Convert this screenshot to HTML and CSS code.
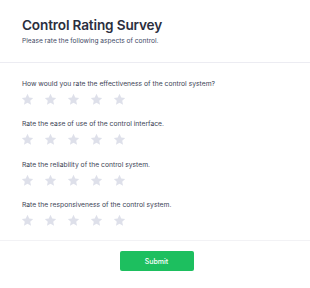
FILE: index.html
```html
<!DOCTYPE html>
<html>
<head>
<meta charset="utf-8">
<link rel="stylesheet" href="styles.css">
</head>
<body>
<div class="survey">
  <header class="header">
    <h1 class="title">Control Rating Survey</h1>
    <p class="subtitle">Please rate the following aspects of control.</p>
  </header>
  <main class="questions">
    <div class="question">
      <p class="q-text">How would you rate the effectiveness of the control system?</p>
      <div class="stars">
        <svg class="star" viewBox="0 0 24 24"><path d="M12 1.5l3.2 6.9 7.3.8-5.5 5 1.6 7.4L12 17.9l-6.6 3.7 1.6-7.4-5.5-5 7.3-.8z"/></svg>
        <svg class="star" viewBox="0 0 24 24"><path d="M12 1.5l3.2 6.9 7.3.8-5.5 5 1.6 7.4L12 17.9l-6.6 3.7 1.6-7.4-5.5-5 7.3-.8z"/></svg>
        <svg class="star" viewBox="0 0 24 24"><path d="M12 1.5l3.2 6.9 7.3.8-5.5 5 1.6 7.4L12 17.9l-6.6 3.7 1.6-7.4-5.5-5 7.3-.8z"/></svg>
        <svg class="star" viewBox="0 0 24 24"><path d="M12 1.5l3.2 6.9 7.3.8-5.5 5 1.6 7.4L12 17.9l-6.6 3.7 1.6-7.4-5.5-5 7.3-.8z"/></svg>
        <svg class="star" viewBox="0 0 24 24"><path d="M12 1.5l3.2 6.9 7.3.8-5.5 5 1.6 7.4L12 17.9l-6.6 3.7 1.6-7.4-5.5-5 7.3-.8z"/></svg>
      </div>
    </div>
    <div class="question">
      <p class="q-text">Rate the ease of use of the control interface.</p>
      <div class="stars">
        <svg class="star" viewBox="0 0 24 24"><path d="M12 1.5l3.2 6.9 7.3.8-5.5 5 1.6 7.4L12 17.9l-6.6 3.7 1.6-7.4-5.5-5 7.3-.8z"/></svg>
        <svg class="star" viewBox="0 0 24 24"><path d="M12 1.5l3.2 6.9 7.3.8-5.5 5 1.6 7.4L12 17.9l-6.6 3.7 1.6-7.4-5.5-5 7.3-.8z"/></svg>
        <svg class="star" viewBox="0 0 24 24"><path d="M12 1.5l3.2 6.9 7.3.8-5.5 5 1.6 7.4L12 17.9l-6.6 3.7 1.6-7.4-5.5-5 7.3-.8z"/></svg>
        <svg class="star" viewBox="0 0 24 24"><path d="M12 1.5l3.2 6.9 7.3.8-5.5 5 1.6 7.4L12 17.9l-6.6 3.7 1.6-7.4-5.5-5 7.3-.8z"/></svg>
        <svg class="star" viewBox="0 0 24 24"><path d="M12 1.5l3.2 6.9 7.3.8-5.5 5 1.6 7.4L12 17.9l-6.6 3.7 1.6-7.4-5.5-5 7.3-.8z"/></svg>
      </div>
    </div>
    <div class="question">
      <p class="q-text">Rate the reliability of the control system.</p>
      <div class="stars">
        <svg class="star" viewBox="0 0 24 24"><path d="M12 1.5l3.2 6.9 7.3.8-5.5 5 1.6 7.4L12 17.9l-6.6 3.7 1.6-7.4-5.5-5 7.3-.8z"/></svg>
        <svg class="star" viewBox="0 0 24 24"><path d="M12 1.5l3.2 6.9 7.3.8-5.5 5 1.6 7.4L12 17.9l-6.6 3.7 1.6-7.4-5.5-5 7.3-.8z"/></svg>
        <svg class="star" viewBox="0 0 24 24"><path d="M12 1.5l3.2 6.9 7.3.8-5.5 5 1.6 7.4L12 17.9l-6.6 3.7 1.6-7.4-5.5-5 7.3-.8z"/></svg>
        <svg class="star" viewBox="0 0 24 24"><path d="M12 1.5l3.2 6.9 7.3.8-5.5 5 1.6 7.4L12 17.9l-6.6 3.7 1.6-7.4-5.5-5 7.3-.8z"/></svg>
        <svg class="star" viewBox="0 0 24 24"><path d="M12 1.5l3.2 6.9 7.3.8-5.5 5 1.6 7.4L12 17.9l-6.6 3.7 1.6-7.4-5.5-5 7.3-.8z"/></svg>
      </div>
    </div>
    <div class="question">
      <p class="q-text">Rate the responsiveness of the control system.</p>
      <div class="stars">
        <svg class="star" viewBox="0 0 24 24"><path d="M12 1.5l3.2 6.9 7.3.8-5.5 5 1.6 7.4L12 17.9l-6.6 3.7 1.6-7.4-5.5-5 7.3-.8z"/></svg>
        <svg class="star" viewBox="0 0 24 24"><path d="M12 1.5l3.2 6.9 7.3.8-5.5 5 1.6 7.4L12 17.9l-6.6 3.7 1.6-7.4-5.5-5 7.3-.8z"/></svg>
        <svg class="star" viewBox="0 0 24 24"><path d="M12 1.5l3.2 6.9 7.3.8-5.5 5 1.6 7.4L12 17.9l-6.6 3.7 1.6-7.4-5.5-5 7.3-.8z"/></svg>
        <svg class="star" viewBox="0 0 24 24"><path d="M12 1.5l3.2 6.9 7.3.8-5.5 5 1.6 7.4L12 17.9l-6.6 3.7 1.6-7.4-5.5-5 7.3-.8z"/></svg>
        <svg class="star" viewBox="0 0 24 24"><path d="M12 1.5l3.2 6.9 7.3.8-5.5 5 1.6 7.4L12 17.9l-6.6 3.7 1.6-7.4-5.5-5 7.3-.8z"/></svg>
      </div>
    </div>
  </main>
  <footer class="footer">
    <button class="submit">Submit</button>
  </footer>
</div>
</body>
</html>
```
FILE: styles.css
```css
html, body {
  margin: 0;
  padding: 0;
  background: #ffffff;
}
body {
  font-family: Inter, "Noto Sans", sans-serif;
  color: #2b2f3e;
}
.survey {
  width: 310px;
  height: 288px;
  display: flex;
  flex-direction: column;
}
.header {
  padding: 17px 22px 0;
  height: 45px;
  border-bottom: 1px solid #ececf2;
}
.title {
  margin: 0;
  font-size: 13.6px;
  line-height: 17px;
  font-weight: 600;
  letter-spacing: -0.15px;
  color: #2b2f3e;
}
.subtitle {
  margin: 3px 0 0;
  font-size: 6.6px;
  line-height: 9px;
  color: #3f4a66;
}
.questions {
  padding: 16px 21px 0;
  height: 161px;
  border-bottom: 1px solid #f2f2f5;
  display: flex;
  flex-direction: column;
}
.question {
  height: 41.5px;
}
.q-text {
  margin: 0 0 0 1px;
  font-size: 6.75px;
  line-height: 9px;
  color: #3d4556;
}
.stars {
  display: flex;
  gap: 10px;
  margin-top: 5px;
}
.star {
  width: 13px;
  height: 13px;
  fill: #dee0ea;
}
.footer {
  display: flex;
  justify-content: center;
  padding: 10px 0 0 3px;
}
.submit {
  width: 74px;
  height: 20px;
  border: none;
  border-radius: 2px;
  background: #1dbf5f;
  color: #ffffff;
  font-family: Inter, "Noto Sans", sans-serif;
  font-size: 7px;
  font-weight: 500;
  padding: 0;
}
```
